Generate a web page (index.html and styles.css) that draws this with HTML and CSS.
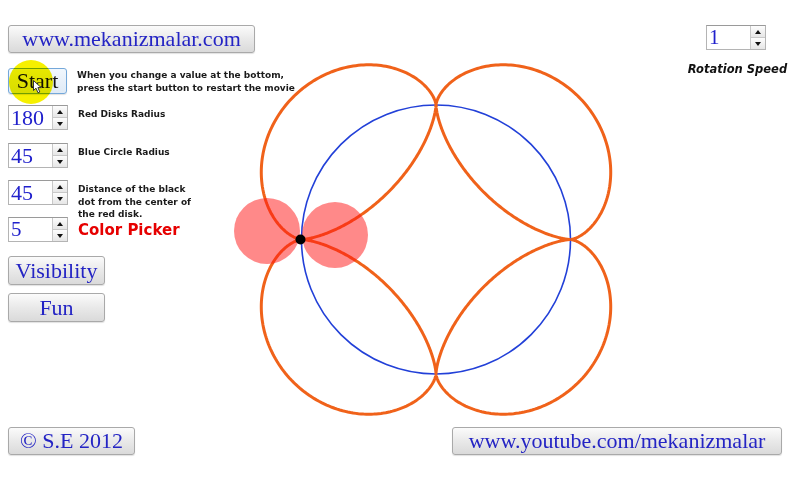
FILE: index.html
```html
<!DOCTYPE html>
<html lang="en">
<head>
  <meta charset="UTF-8">
  <meta name="viewport" content="width=device-width, initial-scale=1.0">
  <title>Mekanizmalar - Epicycloid</title>
  <link rel="stylesheet" href="styles.css">
</head>
<body>
  <div class="screen">
    <div class="work">
      <!-- Left controls -->
      <div class="controls">
        <div class="btn site">www.mekanizmalar.com</div>

        <div class="row row-start">
          <div class="btn start">Start</div>
          <div class="label">When you change a value at the bottom,<br>press the start button to restart the movie</div>
        </div>

        <div class="row row-red">
          <div class="spin"><span class="val">180</span><span class="arrows"><i class="up"></i><i class="down"></i></span></div>
          <div class="label">Red Disks Radius</div>
        </div>

        <div class="row row-blue">
          <div class="spin"><span class="val">45</span><span class="arrows"><i class="up"></i><i class="down"></i></span></div>
          <div class="label">Blue Circle Radius</div>
        </div>

        <div class="row row-dist">
          <div class="spin"><span class="val">45</span><span class="arrows"><i class="up"></i><i class="down"></i></span></div>
          <div class="label">Distance of the black<br>dot from the center of<br>the red disk.</div>
        </div>

        <div class="row row-color">
          <div class="spin"><span class="val small">5</span><span class="arrows"><i class="up"></i><i class="down"></i></span></div>
          <div class="picker">Color Picker</div>
        </div>

        <div class="btn wide visibility">Visibility</div>
        <div class="btn wide fun">Fun</div>

        <!-- click highlight + cursor from the screen recording -->
        <div class="highlight"></div>
        <svg class="cursor" width="10" height="14" viewBox="0 0 10 14">
          <path d="M0.5 0.5 L0.5 10.5 L3 8.2 L5 12.8 L6.8 12 L4.9 7.6 L8.2 7.6 Z" fill="#fff" stroke="#333" stroke-width="1"/>
        </svg>
      </div>

      <!-- Drawing -->
      <svg class="stage" width="400" height="370" viewBox="225 55 400 370">
        <circle cx="436" cy="239.5" r="134.5" fill="none" stroke="#2240d8" stroke-width="1.6"/>
        <path id="epi" fill="none" stroke="#f0621a" stroke-width="3"/>
        <path id="hypo" fill="none" stroke="#f0621a" stroke-width="3"/>
        <circle cx="267" cy="231" r="33" fill="rgba(255, 20, 20, 0.5)"/>
        <circle cx="335" cy="235" r="33" fill="rgba(255, 20, 20, 0.5)"/>
        <circle cx="300.5" cy="239.5" r="5" fill="#000"/>
      </svg>

      <!-- Right controls -->
      <div class="speed">
        <div class="spin"><span class="val small">1</span><span class="arrows"><i class="up"></i><i class="down"></i></span></div>
        <div class="speed-label">Rotation Speed</div>
      </div>
    </div>

    <div class="footer">
      <div class="btn copy">&copy; S.E 2012</div>
      <div class="btn tube">www.youtube.com/mekanizmalar</div>
    </div>
  </div>

  <script>
    // Blue circle and the red disks rolling on it (r = R / 4 gives 4 cusps)
    const cx = 436, cy = 239.5, R = 134.5, r = R / 4;

    function trace(fn) {
      let d = "";
      for (let i = 0; i <= 720; i++) {
        const t = i / 720 * Math.PI * 2;
        const p = fn(t);
        d += (i ? "L" : "M") + p[0].toFixed(2) + " " + p[1].toFixed(2);
      }
      return d + "Z";
    }

    // Outer disk -> epicycloid
    document.getElementById("epi").setAttribute("d", trace(t => [
      cx + (R + r) * Math.cos(t) - r * Math.cos(5 * t),
      cy - ((R + r) * Math.sin(t) - r * Math.sin(5 * t))
    ]));

    // Inner disk -> hypocycloid (astroid)
    document.getElementById("hypo").setAttribute("d", trace(t => [
      cx + (R - r) * Math.cos(t) + r * Math.cos(3 * t),
      cy - ((R - r) * Math.sin(t) - r * Math.sin(3 * t))
    ]));
  </script>
</body>
</html>
```

FILE: styles.css
```css
/* Page */
body {
  margin: 0;
  background: #fff;
  font-family: 'Liberation Serif', 'Times New Roman', serif;
}

.screen {
  width: 800px;
  height: 480px;
  display: flex;
  flex-direction: column;
  overflow: hidden;
}

.work {
  display: flex;
  height: 427px;
}

/* Left column */
.controls {
  position: relative;
  width: 290px;
  box-sizing: border-box;
  padding: 25px 0 0 8px;
  display: flex;
  flex-direction: column;
  align-items: flex-start;
}

/* Buttons */
.btn {
  box-sizing: border-box;
  height: 28px;
  border: 1px solid #a9a9a9;
  border-radius: 3px;
  background: linear-gradient(#fbfbfb, #e9e9e9 50%, #dadada);
  box-shadow: 0 1px 1px rgba(0, 0, 0, 0.12);
  color: #2424c4;
  font-size: 22px;
  line-height: 26px;
  text-align: center;
  white-space: nowrap;
}

.site {
  width: 247px;
}

.start {
  width: 59px;
  height: 26px;
  line-height: 24px;
  color: #111;
  border-color: #74a8da;
  background: linear-gradient(#f1f7fd, #dfeaf6);
  flex-shrink: 0;
}

.wide {
  width: 97px;
  height: 29px;
  line-height: 27px;
}

.visibility {
  margin-top: 14px;
}

.fun {
  margin-top: 8px;
}

/* Rows of inputs with their labels */
.row {
  display: flex;
  align-items: flex-start;
  height: 25px;
  white-space: nowrap;
}

.row-start {
  margin-top: 15px;
  height: 26px;
}

.row-red {
  margin-top: 11px;
}

.row-blue {
  margin-top: 13px;
}

.row-dist {
  margin-top: 12px;
}

.row-color {
  margin-top: 12px;
  align-items: center;
}

.label {
  margin: 1px 0 0 10px;
  font-family: 'DejaVu Sans', Verdana, sans-serif;
  font-weight: bold;
  font-size: 9px;
  line-height: 12.5px;
  color: #1a1a1a;
}

.row-red .label,
.row-blue .label,
.row-dist .label {
  margin-top: 3px;
}

.picker {
  margin-left: 10px;
  font-family: 'DejaVu Sans', Verdana, sans-serif;
  font-weight: bold;
  font-size: 15px;
  color: #e60000;
}

/* Numeric stepper */
.spin {
  box-sizing: border-box;
  display: flex;
  width: 60px;
  height: 25px;
  border: 1px solid #b4b4b4;
  border-top-color: #9a9a9a;
  background: #fff;
  flex-shrink: 0;
}

.val {
  flex: 1;
  padding-left: 2px;
  font-size: 22px;
  line-height: 23px;
  color: #2020cc;
}

.val.small {
  font-size: 21px;
}

.arrows {
  width: 14px;
  display: flex;
  flex-direction: column;
  border-left: 1px solid #c8c8c8;
}

.arrows i {
  flex: 1;
  display: flex;
  align-items: center;
  justify-content: center;
  background: linear-gradient(#fdfdfd, #e6e6e6);
}

.arrows i + i {
  border-top: 1px solid #c8c8c8;
}

.arrows i::before {
  content: "";
  border-left: 3px solid transparent;
  border-right: 3px solid transparent;
}

.up::before {
  border-bottom: 4px solid #111;
}

.down::before {
  border-top: 4px solid #111;
}

/* Screen recording click marker */
.highlight {
  position: absolute;
  left: 9px;
  top: 60px;
  width: 44px;
  height: 44px;
  border-radius: 50%;
  background: #f6f000;
  mix-blend-mode: multiply;
}

.cursor {
  position: absolute;
  left: 33px;
  top: 80px;
}

/* Drawing area */
.stage {
  display: block;
  flex-shrink: 0;
  margin: 55px 0 0 -65px;
}

/* Right column */
.speed {
  margin: 25px 12px 0 auto;
  width: 101px;
  display: flex;
  flex-direction: column;
  align-items: center;
}

.speed .spin {
  margin-right: 3px;
}

.speed-label {
  margin-top: 12px;
  font-family: 'DejaVu Sans', Verdana, sans-serif;
  font-weight: bold;
  font-style: italic;
  font-size: 11.5px;
  color: #111;
  white-space: nowrap;
}

/* Bottom bar */
.footer {
  display: flex;
  justify-content: space-between;
  padding: 0 18px 0 8px;
}

.copy {
  width: 127px;
}

.tube {
  width: 330px;
}
```
